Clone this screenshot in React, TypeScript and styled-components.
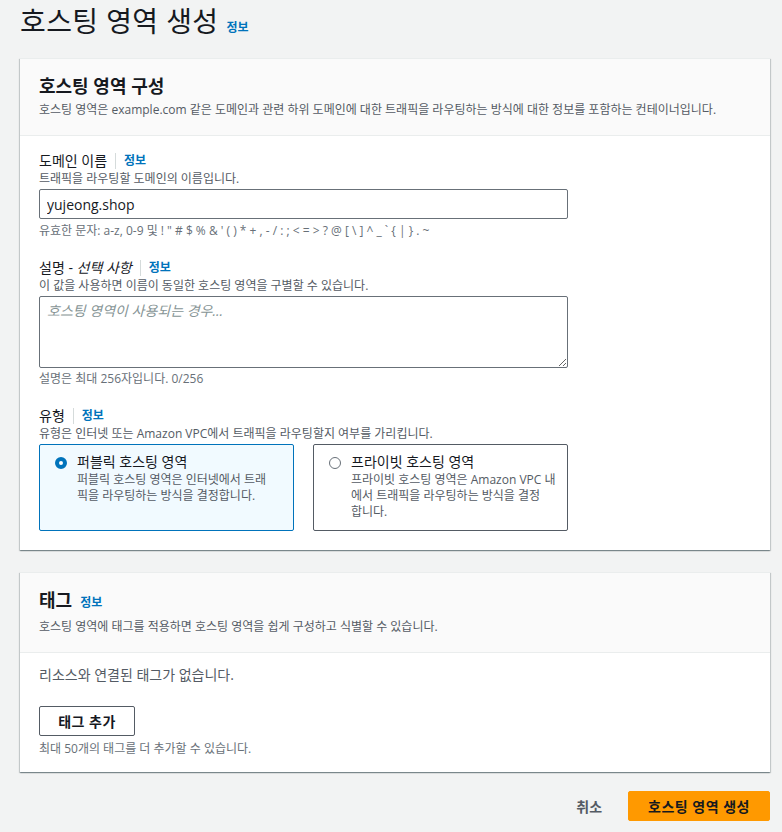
import styled, { createGlobalStyle } from "styled-components";

const Global = createGlobalStyle`
  body {
    margin: 0;
    background: #f2f3f3;
    font-family: "Open Sans", "Noto Sans CJK KR", sans-serif;
    color: #16191f;
  }
`;

const Page = styled.div`
  width: 750px;
  padding: 2px 0 0 20px;
  display: flex;
  flex-direction: column;
`;

const TitleRow = styled.div`
  display: flex;
  align-items: baseline;
  gap: 8px;
  height: 38px;
  margin-bottom: 18px;
`;

const PageTitle = styled.h1`
  margin: 0;
  font-size: 28px;
  font-weight: 400;
  line-height: 38px;
  letter-spacing: 0.4px;
`;

const Info = styled.a`
  color: #0073bb;
  font-size: 12px;
  font-weight: 700;
  text-decoration: none;
`;

const Card = styled.section`
  background: #fff;
  box-shadow: 0 1px 1px 0 rgba(0, 28, 36, 0.3), 1px 1px 1px 0 rgba(0, 28, 36, 0.15),
    -1px 1px 1px 0 rgba(0, 28, 36, 0.15);
  border-top: 1px solid #eaeded;
  margin-bottom: 22px;
`;

const CardHeader = styled.header`
  background: #fafafa;
  border-bottom: 1px solid #eaeded;
  padding: 14px 20px 16px 19px;
`;

const CardTitle = styled.h2`
  margin: 0;
  font-size: 18px;
  font-weight: 700;
  line-height: 26px;
  display: flex;
  align-items: baseline;
  gap: 8px;
`;

const CardDesc = styled.p`
  margin: 2px 0 0;
  font-size: 12px;
  line-height: 18px;
  color: #545b64;
`;

const CardBody = styled.div<{ $top?: number; $bottom?: number }>`
  padding: ${(p) => p.$top ?? 14}px 20px ${(p) => p.$bottom ?? 19}px 19px;
  display: flex;
  flex-direction: column;
`;

const Field = styled.div<{ $gap?: number }>`
  display: flex;
  flex-direction: column;
  margin-bottom: ${(p) => p.$gap ?? 0}px;
`;

const Label = styled.div`
  display: flex;
  align-items: center;
  font-size: 14px;
  line-height: 21px;
  color: #16191f;
`;

const Sep = styled.span`
  width: 1px;
  height: 16px;
  background: #d5dbdb;
  margin: 0 8px;
`;

const Hint = styled.div<{ $top?: number }>`
  font-size: 12px;
  line-height: 18px;
  color: #687078;
  margin-top: ${(p) => p.$top ?? 0}px;
`;

const Desc = styled.div`
  font-size: 12px;
  line-height: 16px;
  color: #545b64;
  margin-bottom: 2px;
`;

const Input = styled.input`
  box-sizing: border-box;
  width: 529px;
  height: 30px;
  border: 1px solid #687078;
  border-radius: 2px;
  padding: 0 7px;
  font: inherit;
  font-size: 14px;
  color: #16191f;
  background: #fff;
  outline: none;
`;

const TextArea = styled.textarea`
  box-sizing: border-box;
  width: 529px;
  height: 72px;
  border: 1px solid #687078;
  border-radius: 2px;
  padding: 3px 7px;
  font: inherit;
  font-size: 14px;
  line-height: 22px;
  resize: vertical;
  outline: none;
  &::placeholder {
    color: #879596;
    font-style: italic;
  }
`;

const Tiles = styled.div`
  display: grid;
  grid-template-columns: 255px 255px;
  gap: 19px;
`;

const Tile = styled.label<{ $on?: boolean }>`
  box-sizing: border-box;
  height: 87px;
  border: 1px solid ${(p) => (p.$on ? "#0073bb" : "#545b64")};
  background: ${(p) => (p.$on ? "#f1faff" : "#fff")};
  border-radius: 2px;
  padding: 7px 8px 0 15px;
  display: flex;
  gap: 10px;
`;

const Radio = styled.span<{ $on?: boolean }>`
  box-sizing: border-box;
  flex: none;
  width: 12px;
  height: 12px;
  margin-top: 5px;
  border-radius: 50%;
  border: ${(p) => (p.$on ? "4px solid #0073bb" : "1.5px solid #687078")};
  background: #fff;
`;

const TileText = styled.div`
  display: flex;
  flex-direction: column;
`;

const TileTitle = styled.div`
  font-size: 14px;
  line-height: 20px;
`;

const TileDesc = styled.div`
  font-size: 12px;
  line-height: 16px;
  color: #545b64;
`;

const Empty = styled.div`
  font-size: 14px;
  line-height: 22px;
  color: #545b64;
  margin: 0 0 20px;
`;

const Button = styled.button<{ $primary?: boolean }>`
  box-sizing: border-box;
  height: 30px;
  border-radius: 2px;
  font: inherit;
  font-size: 14px;
  font-weight: 700;
  white-space: nowrap;
  cursor: pointer;
  color: #16191f;
  background: ${(p) => (p.$primary ? "#ff9900" : "#fff")};
  border: 1px solid ${(p) => (p.$primary ? "#ff9900" : "#545b64")};
  padding: 0 19px;
  letter-spacing: 0.5px;
`;

const AddBtn = styled(Button)`
  width: 96px;
  padding: 0;
  align-self: flex-start;
`;

const Footer = styled.div`
  display: flex;
  justify-content: flex-end;
  align-items: center;
  gap: 8px;
  margin-top: -3px;
`;

const Cancel = styled.button`
  background: none;
  border: none;
  font: inherit;
  font-size: 14px;
  font-weight: 700;
  color: #545b64;
  padding: 0 18px;
  height: 30px;
  cursor: pointer;
`;

export default function App() {
  return (
    <>
      <Global />
      <Page>
        <TitleRow>
          <PageTitle>호스팅 영역 생성</PageTitle>
          <Info href="#">정보</Info>
        </TitleRow>

        <Card>
          <CardHeader>
            <CardTitle>호스팅 영역 구성</CardTitle>
            <CardDesc>
              호스팅 영역은 example.com 같은 도메인과 관련 하위 도메인에 대한 트래픽을 라우팅하는 방식에 대한 정보를 포함하는 컨테이너입니다.
            </CardDesc>
          </CardHeader>
          <CardBody>
            <Field $gap={17}>
              <Label>
                도메인 이름<Sep />
                <Info href="#">정보</Info>
              </Label>
              <Desc>트래픽을 라우팅할 도메인의 이름입니다.</Desc>
              <Input defaultValue="yujeong.shop" />
              <Hint $top={3}>
                유효한 문자: a-z, 0-9 및 ! " # $ % &amp; ' ( ) * + , - / : ; &lt; = &gt; ? @ [ \ ] ^ _ ` {"{"} | {"}"} . ~
              </Hint>
            </Field>

            <Field $gap={17}>
              <Label>
                <span>
                  설명 - <i>선택 사항</i>
                </span>
                <Sep />
                <Info href="#">정보</Info>
              </Label>
              <Desc>이 값을 사용하면 이름이 동일한 호스팅 영역을 구별할 수 있습니다.</Desc>
              <TextArea placeholder="호스팅 영역이 사용되는 경우..." />
              <Hint $top={2}>설명은 최대 256자입니다. 0/256</Hint>
            </Field>

            <Field>
              <Label>
                유형<Sep />
                <Info href="#">정보</Info>
              </Label>
              <Desc>유형은 인터넷 또는 Amazon VPC에서 트래픽을 라우팅할지 여부를 가리킵니다.</Desc>
              <Tiles>
                <Tile $on>
                  <Radio $on />
                  <TileText>
                    <TileTitle>퍼블릭 호스팅 영역</TileTitle>
                    <TileDesc>
                      퍼블릭 호스팅 영역은 인터넷에서 트래
                      <br />
                      픽을 라우팅하는 방식을 결정합니다.
                    </TileDesc>
                  </TileText>
                </Tile>
                <Tile>
                  <Radio />
                  <TileText>
                    <TileTitle>프라이빗 호스팅 영역</TileTitle>
                    <TileDesc>
                      프라이빗 호스팅 영역은 Amazon VPC 내
                      <br />
                      에서 트래픽을 라우팅하는 방식을 결정
                      <br />
                      합니다.
                    </TileDesc>
                  </TileText>
                </Tile>
              </Tiles>
            </Field>
          </CardBody>
        </Card>

        <Card>
          <CardHeader>
            <CardTitle>
              태그 <Info href="#">정보</Info>
            </CardTitle>
            <CardDesc>호스팅 영역에 태그를 적용하면 호스팅 영역을 쉽게 구성하고 식별할 수 있습니다.</CardDesc>
          </CardHeader>
          <CardBody $top={11} $bottom={14}>
            <Empty>리소스와 연결된 태그가 없습니다.</Empty>
            <AddBtn>태그 추가</AddBtn>
            <Hint $top={4}>최대 50개의 태그를 더 추가할 수 있습니다.</Hint>
          </CardBody>
        </Card>

        <Footer>
          <Cancel>취소</Cancel>
          <Button $primary>호스팅 영역 생성</Button>
        </Footer>
      </Page>
    </>
  );
}
